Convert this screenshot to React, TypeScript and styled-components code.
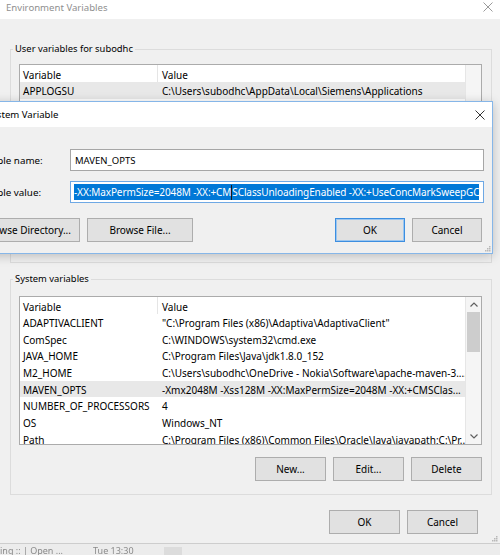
import React from 'react';
import styled, { createGlobalStyle } from 'styled-components';

const GlobalStyle = createGlobalStyle`
  html, body {
    margin: 0;
    padding: 0;
  }
  body {
    width: 500px;
    height: 555px;
    overflow: hidden;
    background: #f0f0f0;
    font-family: "Noto Sans", "Segoe UI", sans-serif;
    font-size: 10px;
    color: #000;
  }
`;

const Screen = styled.div`
  position: relative;
  width: 500px;
  height: 555px;
  overflow: hidden;
  display: flex;
  flex-direction: column;
`;

const Window = styled.div`
  position: relative;
  height: 543px;
  display: flex;
  flex-direction: column;
  background: #f0f0f0;
  border-bottom: 1px solid #cdcdcd;
`;

const TitleBar = styled.div<{ $height: number; $muted?: boolean }>`
  height: ${(p) => p.$height}px;
  flex: 0 0 auto;
  background: #fff;
  display: flex;
  align-items: center;
  justify-content: space-between;
  color: ${(p) => (p.$muted ? '#8f8f8f' : '#000')};
  font-size: 9.6px;
`;

const TitleText = styled.span<{ $indent: number; $shift?: number }>`
  padding-left: ${(p) => p.$indent}px;
  margin-top: ${(p) => p.$shift ?? 0}px;
  white-space: nowrap;
`;

const CloseIcon = styled.svg<{ $right: number; $shift?: number }>`
  margin-right: ${(p) => p.$right}px;
  margin-top: ${(p) => p.$shift ?? 0}px;
  flex: 0 0 auto;
`;

const Main = styled.div`
  padding: 0 8px 0 10px;
  display: flex;
  flex-direction: column;
`;

const GroupBox = styled.fieldset<{ $top: number; $inner: number }>`
  margin: ${(p) => p.$top}px 0 0;
  padding: ${(p) => p.$inner}px 9px 13px 8px;
  border: 1px solid #dcdcdc;
  min-width: 0;
  display: flex;
  flex-direction: column;
`;

const Legend = styled.legend`
  padding: 0 2px;
  margin-left: -6px;
  line-height: 14px;
  font-size: 9.4px;
  color: #000;
`;

const ListView = styled.div<{ $height: number }>`
  height: ${(p) => p.$height}px;
  border: 1px solid #ababab;
  background: #fff;
  display: flex;
  overflow: hidden;
`;

const ListBody = styled.div`
  flex: 1;
  min-width: 0;
  display: flex;
  flex-direction: column;
`;

const Row = styled.div<{ $header?: boolean; $selected?: boolean }>`
  flex: 0 0 auto;
  height: ${(p) => (p.$header ? '17px' : '16.7px')};
  display: grid;
  grid-template-columns: 138px 1fr;
  align-items: center;
  background: ${(p) => (p.$selected ? '#e8e8e8' : '#fff')};
  white-space: nowrap;
`;

const Cell = styled.div<{ $first?: boolean; $header?: boolean }>`
  height: 100%;
  box-sizing: border-box;
  display: flex;
  align-items: center;
  padding-left: ${(p) => (p.$first ? 3 : 4)}px;
  padding-right: 4px;
  padding-top: ${(p) => (p.$header ? 2 : 1)}px;
  overflow: hidden;
  border-right: ${(p) => (p.$header && p.$first ? '1px solid #e5e5e5' : 'none')};
`;

const ScrollBar = styled.div`
  width: 15px;
  flex: 0 0 auto;
  background: #f5f5f5;
  border-left: 1px solid #e6e6e6;
  display: flex;
  flex-direction: column;
  align-items: center;
`;

const ScrollArrow = styled.div`
  height: 15px;
  width: 100%;
  display: flex;
  align-items: center;
  justify-content: center;
  flex: 0 0 auto;
`;

const ScrollThumb = styled.div`
  width: 13px;
  height: 40px;
  background: #cdcdcd;
  flex: 0 0 auto;
`;

const ScrollTrack = styled.div`
  flex: 1;
`;

const ButtonRow = styled.div<{ $top: number; $right?: number; $covered?: boolean }>`
  margin-top: ${(p) => p.$top}px;
  margin-right: ${(p) => p.$right ?? 0}px;
  display: flex;
  justify-content: flex-end;
  gap: 7px;
  visibility: ${(p) => (p.$covered ? 'hidden' : 'visible')};
`;

const SplitRow = styled.div`
  margin-top: 15px;
  margin-right: 2px;
  display: flex;
  justify-content: space-between;
`;

const ButtonGroup = styled.div`
  display: flex;
  gap: 7px;
`;

const Button = styled.button<{ $width: number; $default?: boolean }>`
  width: ${(p) => p.$width}px;
  height: 24px;
  padding: 0;
  margin: 0;
  background: #e1e1e1;
  border: 1px solid ${(p) => (p.$default ? '#3c8ee0' : '#adadad')};
  box-shadow: ${(p) => (p.$default ? 'inset 0 0 0 1px #9cc6ef' : 'none')};
  font-family: inherit;
  font-size: 10px;
  color: #000;
  white-space: nowrap;
  overflow: hidden;
`;

const Dialog = styled.div`
  position: absolute;
  top: 101px;
  left: -39px;
  width: 532px;
  height: 153px;
  box-sizing: border-box;
  border: 1px solid #86b6e8;
  background: #f0f0f0;
  box-shadow: 0 2px 10px rgba(0, 0, 0, 0.22);
  display: flex;
  flex-direction: column;
`;

const DialogBody = styled.div`
  padding: 22px 8px 0 12px;
  display: flex;
  flex-direction: column;
`;

const FieldGrid = styled.div`
  display: grid;
  grid-template-columns: 96px 1fr;
  row-gap: 10px;
  align-items: center;
`;

const FieldLabel = styled.label`
  white-space: nowrap;
  font-size: 9.8px;
`;

const TextField = styled.div<{ $focused?: boolean }>`
  height: 22px;
  box-sizing: border-box;
  border: 1px solid ${(p) => (p.$focused ? '#6ea8e4' : '#a6a6a6')};
  background: #fff;
  display: flex;
  align-items: center;
  padding-left: 4px;
  overflow: hidden;
  white-space: nowrap;
  font-size: 9.5px;
`;

const Selection = styled.span`
  background: #0078d7;
  color: #fff;
  line-height: 16px;
  font-size: 10px;
  letter-spacing: -0.1px;
  margin-left: -1px;
`;

const Caret = styled.span`
  display: inline-block;
  width: 1px;
  height: 15px;
  vertical-align: middle;
  background: #1a1a1a;
`;

const Grip = styled.svg<{ $bottom: number; $right: number }>`
  position: absolute;
  bottom: ${(p) => p.$bottom}px;
  right: ${(p) => p.$right}px;
`;

const Taskbar = styled.div`
  height: 11px;
  background: #ececec;
  display: flex;
  align-items: flex-start;
  overflow: hidden;
  color: #8a8a8a;
  font-size: 9px;
  line-height: 9px;
  gap: 30px;
`;

const TaskText = styled.span`
  margin-top: 2px;
  white-space: nowrap;
  filter: blur(0.4px);
`;

const TaskBox = styled.span`
  margin-top: 3px;
  width: 18px;
  height: 8px;
  background: #dcdcdc;
`;

const CloseGlyph = ({ color, right, shift }: { color: string; right: number; shift?: number }) => (
  <CloseIcon $right={right} $shift={shift} width="10" height="10" viewBox="0 0 10 10">
    <path d="M0.5 0.5 L9.5 9.5 M9.5 0.5 L0.5 9.5" stroke={color} strokeWidth="1" fill="none" />
  </CloseIcon>
);

const Chevron = ({ up }: { up?: boolean }) => (
  <svg width="8" height="5" viewBox="0 0 8 5">
    <path
      d={up ? 'M0.5 4.5 L4 1 L7.5 4.5' : 'M0.5 0.5 L4 4 L7.5 0.5'}
      stroke="#606060"
      strokeWidth="1.2"
      fill="none"
    />
  </svg>
);

const GripDots = ({ bottom, right }: { bottom: number; right: number }) => (
  <Grip $bottom={bottom} $right={right} width="6" height="6" viewBox="0 0 6 6">
    <rect x="4" y="0" width="1.5" height="1.5" fill="#b8b8b8" />
    <rect x="2" y="2" width="1.5" height="1.5" fill="#b8b8b8" />
    <rect x="4" y="2" width="1.5" height="1.5" fill="#b8b8b8" />
    <rect x="0" y="4" width="1.5" height="1.5" fill="#b8b8b8" />
    <rect x="2" y="4" width="1.5" height="1.5" fill="#b8b8b8" />
    <rect x="4" y="4" width="1.5" height="1.5" fill="#b8b8b8" />
  </Grip>
);

const userVars: [string, string][] = [
  ['APPLOGSU', 'C:\\Users\\subodhc\\AppData\\Local\\Siemens\\Applications'],
];

const systemVars: [string, string][] = [
  ['ADAPTIVACLIENT', '"C:\\Program Files (x86)\\Adaptiva\\AdaptivaClient"'],
  ['ComSpec', 'C:\\WINDOWS\\system32\\cmd.exe'],
  ['JAVA_HOME', 'C:\\Program Files\\Java\\jdk1.8.0_152'],
  ['M2_HOME', 'C:\\Users\\subodhc\\OneDrive - Nokia\\Software\\apache-maven-3....'],
  ['MAVEN_OPTS', '-Xmx2048M -Xss128M -XX:MaxPermSize=2048M -XX:+CMSClas...'],
  ['NUMBER_OF_PROCESSORS', '4'],
  ['OS', 'Windows_NT'],
  ['Path', 'C:\\Program Files (x86)\\Common Files\\Oracle\\Java\\javapath;C:\\Pr...'],
];

const VarList = ({
  rows,
  height,
  selected,
  scroll,
}: {
  rows: [string, string][];
  height: number;
  selected: string;
  scroll?: boolean;
}) => (
  <ListView $height={height}>
    <ListBody>
      <Row $header>
        <Cell $first $header>Variable</Cell>
        <Cell $header>Value</Cell>
      </Row>
      {rows.map(([name, value]) => (
        <Row key={name} $selected={name === selected}>
          <Cell $first>{name}</Cell>
          <Cell>{value}</Cell>
        </Row>
      ))}
    </ListBody>
    <ScrollBar>
      {scroll && (
        <>
          <ScrollArrow>
            <Chevron up />
          </ScrollArrow>
          <ScrollThumb />
          <ScrollTrack />
          <ScrollArrow>
            <Chevron />
          </ScrollArrow>
        </>
      )}
    </ScrollBar>
  </ListView>
);

const App: React.FC = () => {
  return (
    <Screen>
      <GlobalStyle />
      <Window>
        <TitleBar $height={19} $muted>
          <TitleText $indent={6} $shift={-5}>Environment Variables</TitleText>
          <CloseGlyph color="#9a9a9a" right={7} shift={-5} />
        </TitleBar>
        <Main>
          <GroupBox $top={23} $inner={8}>
            <Legend>User variables for subodhc</Legend>
            <VarList rows={userVars} height={145} selected="APPLOGSU" />
            {/* sits under the edit dialog */}
            <ButtonRow $top={14} $covered>
              <Button $width={71}>New...</Button>
              <Button $width={71}>Edit...</Button>
              <Button $width={71}>Delete</Button>
            </ButtonRow>
          </GroupBox>
          <GroupBox $top={9} $inner={10}>
            <Legend>System variables</Legend>
            <VarList rows={systemVars} height={147} selected="MAVEN_OPTS" scroll />
            <ButtonRow $top={12}>
              <Button $width={71}>New...</Button>
              <Button $width={71}>Edit...</Button>
              <Button $width={71}>Delete</Button>
            </ButtonRow>
          </GroupBox>
          <ButtonRow $top={15} $right={14}>
            <Button $width={71}>OK</Button>
            <Button $width={71}>Cancel</Button>
          </ButtonRow>
        </Main>
        <GripDots bottom={1} right={2} />
      </Window>
      <Taskbar>
        <TaskText>ing :: | Open ...</TaskText>
        <TaskText>Tue 13:30</TaskText>
        <TaskBox />
      </Taskbar>

      <Dialog>
        <TitleBar $height={25}>
          <TitleText $indent={5}>Edit System Variable</TitleText>
          <CloseGlyph color="#333" right={7} />
        </TitleBar>
        <DialogBody>
          <FieldGrid>
            <FieldLabel>Variable name:</FieldLabel>
            <TextField>MAVEN_OPTS</TextField>
            <FieldLabel>Variable value:</FieldLabel>
            <TextField $focused>
              <Selection>
                -XX:MaxPermSize=2048M -XX:+CM
                <Caret />
                SClassUnloadingEnabled -XX:+UseConcMarkSweepGC
              </Selection>
            </TextField>
          </FieldGrid>
          <SplitRow>
            <ButtonGroup>
              <Button $width={106}>Browse Directory...</Button>
              <Button $width={106}>Browse File...</Button>
            </ButtonGroup>
            <ButtonGroup>
              <Button $width={70} $default>
                OK
              </Button>
              <Button $width={70}>Cancel</Button>
            </ButtonGroup>
          </SplitRow>
        </DialogBody>
        <GripDots bottom={1} right={1} />
      </Dialog>
    </Screen>
  );
};

export default App;
